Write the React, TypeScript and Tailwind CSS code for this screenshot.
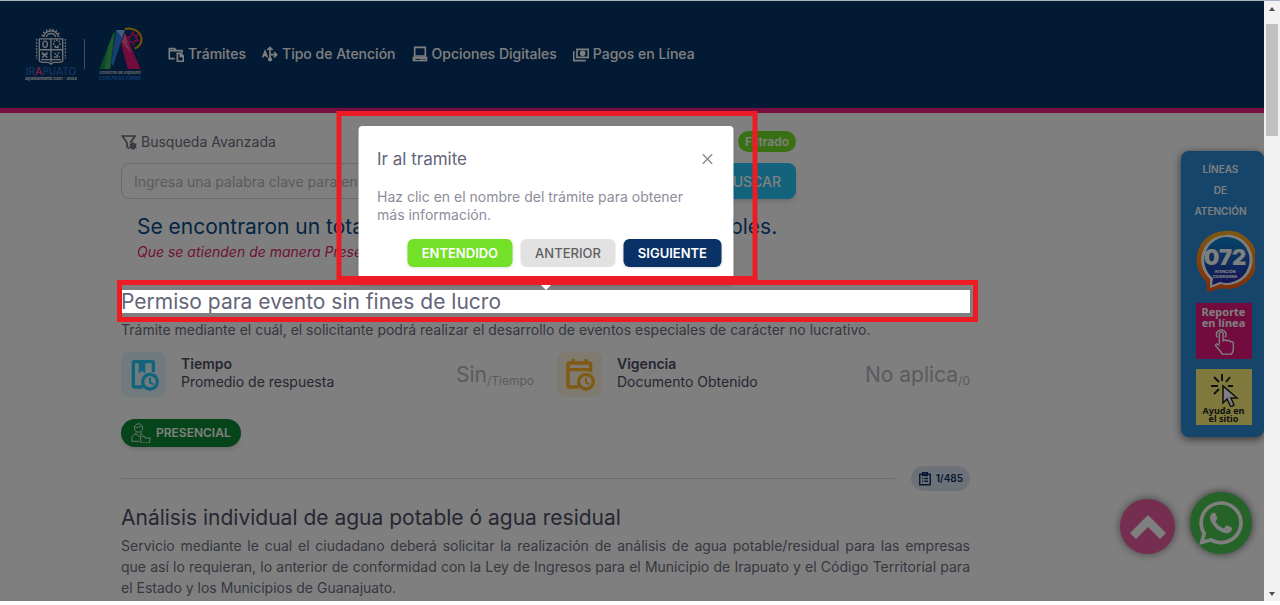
import { FaWhatsapp } from 'react-icons/fa';
import type { ReactNode } from 'react';

function Icon({ className, children }: { className: string; children: ReactNode }) {
  return (
    <svg
      viewBox="0 0 24 24"
      fill="none"
      stroke="currentColor"
      strokeWidth="2.5"
      className={className}
      aria-hidden="true"
    >
      {children}
    </svg>
  );
}

const navItems = [
  {
    label: 'Trámites',
    icon: (
      <>
        <path d="M10 19H2V4h8l2 3h9v3" />
        <path d="M2 7h10" />
        <path d="M14 11h5l4 4v8h-9zM18.5 11v4.5H23" />
      </>
    ),
  },
  {
    label: 'Tipo de Atención',
    icon: (
      <>
        <path d="M12 2v19M8 6l4-4 4 4M12 13h10M18 9l4 4-4 4" />
        <path d="M1 17L4.5 8 8 17M2 14h5" />
        <circle cx="12" cy="20" r="2" fill="currentColor" />
      </>
    ),
  },
  {
    label: 'Opciones Digitales',
    icon: (
      <>
        <path d="M4 2h16v13H4z" />
        <path d="M1 16h22v7H1z" fill="currentColor" stroke="none" />
        <path d="M5 20h8M15 20h2M18.5 20h2" stroke="#063468" strokeWidth="1.5" />
      </>
    ),
  },
  {
    label: 'Pagos en Línea',
    icon: (
      <>
        <path d="M6 5h17v12H6z" />
        <circle cx="14.5" cy="11" r="3" fill="currentColor" />
        <path d="M1 8v14h18" />
      </>
    ),
  },
];

const metrics = [
  {
    title: 'Tiempo',
    text: 'Promedio de respuesta',
    value: 'Sin',
    unit: 'Tiempo',
    tile: 'bg-[#dff6fe] text-[#26c6f9]',
    icon: (
      <>
        <path d="M11 21H5a1 1 0 0 1-1-1V3a1 1 0 0 1 1-1h13a1 1 0 0 1 1 1v7" />
        <path d="M8 2v9l2.5-2 2.5 2V2z" fill="currentColor" stroke="none" />
        <circle cx="16.5" cy="17" r="5.5" />
        <path d="M16.5 14v3.5l2.5 1.5" strokeWidth="1.5" />
      </>
    ),
  },
  {
    title: 'Vigencia',
    text: 'Documento Obtenido',
    value: 'No aplica',
    unit: '0',
    tile: 'bg-[#fff4df] text-[#fdb528]',
    icon: (
      <>
        <path d="M11 21H4a1 1 0 0 1-1-1V4a1 1 0 0 1 1-1h15a1 1 0 0 1 1 1v6" />
        <path d="M3 8h17M7 0v3M16.5 0v3" />
        <circle cx="16.5" cy="17" r="5.5" />
        <path d="M16.5 14v3.5l2.5 1.5" strokeWidth="1.5" />
      </>
    ),
  },
];

function CityLogo() {
  return (
    <a href="#" aria-label="Irapuato" className="w-[54px] flex flex-col items-center">
      <svg viewBox="0 0 40 40" className="w-9 h-10" fill="none" stroke="#e5e7eb" strokeWidth="1.5">
        <path d="M12 9a8 7 0 0 1 16 0" />
        <path d="M11 8a9 7 0 0 1 18 0" strokeWidth="3" strokeDasharray="1.5 2" />
        <path d="M15 9a5 4 0 0 1 10 0" />
        <path d="M7 11h26v24c0 2-2 2-5 2h-5l-3 2-3-2h-5c-3 0-5 0-5-2z" />
        <path d="M4 11v22M36 11v22" strokeDasharray="2 1.5" />
        <path d="M20 11v26M7 23h26M9 34h22" />
        <ellipse cx="13.5" cy="17" rx="2.5" ry="3.5" />
        <circle cx="26.5" cy="16" r="3.5" strokeDasharray="2 1" />
        <path d="M24 20l5 1M10 26l6 6M16 26l-6 6M10 28h6" />
        <path d="M24 27l5 4M29 26l-4 6M23 31h7" strokeDasharray="2 1" />
      </svg>
      <span className="text-[10px] leading-[9px] font-semibold text-[#2563b5]">
        IR<span className="text-[#e83e8c]">A</span>PUATO
      </span>
      <span className="whitespace-nowrap text-[4px] leading-[5px] font-bold text-[#e5e7eb]">
        Ayuntamiento 2021 - 2024
      </span>
    </a>
  );
}

function GovernmentLogo() {
  return (
    <a href="#" aria-label="Gobierno de Irapuato" className="w-12 flex flex-col items-center">
      <svg viewBox="0 0 46 44" className="w-[46px] h-[43px]">
        <path d="M2 43L16 6l2 0-5 37z" fill="#0c9a47" />
        <path d="M11 20l6-14-4 37H7z" fill="#3fae5c" />
        <path d="M19 3h9L16 40l-2-3z" fill="#2b7fe0" />
        <path d="M19 3h9l-3 8z" fill="#8ab8f5" />
        <path d="M28 6l16 37H31L24 17z" fill="#e6187d" />
        <path d="M28 6l6 21-9-12z" fill="#f0669f" />
        <path d="M28 2c10-2 17 4 17 11 0 4-3 8-7 9" fill="none" stroke="#f5a800" strokeWidth="2" />
        <path
          d="M36 5l1 4 4-1-2 3 3 3-4 0-1 4-2-3-4 2 2-4-3-3 4 0z"
          fill="none"
          stroke="#e6187d"
          strokeWidth="1.5"
        />
      </svg>
      <span className="whitespace-nowrap text-[4px] leading-[5px] italic font-bold text-[#d1d5db]">
        Gobierno de Irapuato
      </span>
      <span className="whitespace-nowrap text-[5px] leading-[6px] italic font-bold text-[#2b6fd0]">
        CON PASO FIRME
      </span>
    </a>
  );
}

function Header() {
  return (
    <header className="h-[112px] shrink-0 flex items-center pl-6 pb-[2px] bg-[#063468] border-b-[5px] border-[#f01a80]">
      <CityLogo />
      <div className="w-px h-[30px] ml-[6px] mr-[11px] bg-[#8b9bb0]" />
      <GovernmentLogo />
      <nav className="flex gap-4 ml-6 text-[14px] font-medium text-white">
        {navItems.map((item) => (
          <a key={item.label} href="#" className="flex items-center gap-1 whitespace-nowrap">
            <Icon className="size-4">{item.icon}</Icon>
            {item.label}
          </a>
        ))}
      </nav>
    </header>
  );
}

function SearchForm() {
  return (
    <form className="w-[675px]">
      <div className="flex items-center justify-between">
        <label htmlFor="keyword" className="flex items-center gap-1 text-[14px] text-[#6d6f7f]">
          <Icon className="size-4">
            <path d="M14 13l7-10H2l7 10v6l3 3" />
            <circle cx="18" cy="18" r="3.5" />
            <path d="M18 12v12M12.5 15l11 6M12.5 21l11-6" strokeWidth="1.5" />
          </Icon>
          Busqueda Avanzada
        </label>
        <span className="h-[21px] px-[7px] flex items-center rounded-full bg-[#72e128] text-[12px] font-semibold text-white">
          Filtrado
        </span>
      </div>
      <div className="flex mt-[11px] gap-2">
        <input
          id="keyword"
          type="text"
          placeholder="Ingresa una palabra clave para encontrar tu trámite"
          className="grow h-9 px-3 rounded-lg border border-[#d3d4da] text-[14px] text-[#4c4e64] placeholder:text-[#b4b5be]"
        />
        <button
          type="button"
          className="h-9 px-[15px] rounded-lg bg-[#26c6f9] text-[14px] font-medium text-white shadow-md"
        >
          BUSCAR
        </button>
      </div>
    </form>
  );
}

function TourPopover() {
  return (
    <div className="absolute bottom-[5px] left-1/2 -translate-x-1/2 w-[375px] h-[159px]">
      <div
        role="dialog"
        aria-label="Ir al tramite"
        className="h-full flex flex-col px-3 pt-[21px] rounded bg-white shadow"
      >
        <div className="flex items-center justify-between px-[7px]">
          <h3 className="text-[17px] leading-6 text-[#636578]">Ir al tramite</h3>
          <button type="button" aria-label="Cerrar" className="text-[#8d8d8d]">
            <Icon className="size-[14px]">
              <path d="M4 4l16 16M20 4L4 20" />
            </Icon>
          </button>
        </div>
        <p className="mt-[17px] px-[7px] text-[14px] leading-[18px] text-[#8c8d9b]">
          Haz clic en el nombre del trámite para obtener más información.
        </p>
        <div className="flex justify-end gap-2 mt-[15px] text-[13px] leading-7">
          <button type="button" className="px-[14px] rounded-md bg-[#72e128] font-semibold text-white shadow">
            ENTENDIDO
          </button>
          <button type="button" className="px-[15px] rounded-md bg-[#e2e2e2] font-medium text-[#606060]">
            ANTERIOR
          </button>
          <button type="button" className="px-[14px] rounded-md bg-[#0a3266] font-semibold text-white shadow">
            SIGUIENTE
          </button>
        </div>
      </div>
      <div className="absolute -left-[22px] -right-6 -top-[15px] bottom-1 border-5 border-[#ed1c24]" />
    </div>
  );
}

function HighlightedTitle() {
  return (
    <div className="relative z-20 mt-7">
      {/* the wide spread shadow dims the rest of the page */}
      <h2 className="bg-white text-[21px] leading-[23px] text-[#636578] shadow-[0_0_0_3000px_rgba(0,0,0,0.5)]">
        <a href="#">Permiso para evento sin fines de lucro</a>
      </h2>
      <div className="absolute inset-x-0 bottom-full">
        <TourPopover />
      </div>
      <div className="absolute -left-1 -right-2 -top-[10px] -bottom-[9px] border-5 border-[#ed1c24]" />
      <svg viewBox="0 0 10 5" className="absolute bottom-full left-1/2 -translate-x-1/2 w-[10px] h-[5px]">
        <path d="M0 0h10L5 5z" fill="#fff" />
      </svg>
    </div>
  );
}

function Results() {
  return (
    <main className="pl-[121px] pr-[294px] pt-[18px]">
      <SearchForm />
      <div className="pl-4 mt-[14px]">
        <h1 className="text-[21px] leading-7 text-[#0a4a8c]">
          Se encontraron un total de 485 Trámites y Servicios disponibles.
        </h1>
        <p className="text-[14px] leading-[21px] italic text-[#e0246f]">Que se atienden de manera Presencial</p>
      </div>

      <HighlightedTitle />
      <p className="mt-[7px] text-[14px] leading-5 text-[#6d6f7f]">
        Trámite mediante el cuál, el solicitante podrá realizar el desarrollo de eventos especiales de carácter no
        lucrativo.
      </p>

      <div className="grid grid-cols-2 gap-[23px] mt-3">
        {metrics.map((m) => (
          <div key={m.title} className="flex items-center">
            <div className={`size-[45px] flex items-center justify-center rounded-lg ${m.tile}`}>
              <Icon className="size-8">{m.icon}</Icon>
            </div>
            <div className="ml-[15px] pb-1 text-[14px] leading-[18px] text-[#4c4e64]">
              <div className="font-semibold">{m.title}</div>
              <div>{m.text}</div>
            </div>
            <div className="ml-auto text-[21px] text-[#b4b5be]">
              {m.value}
              <sub className="text-[12px]">/{m.unit}</sub>
            </div>
          </div>
        ))}
      </div>

      <button
        type="button"
        className="mt-[22px] h-7 px-[10px] flex items-center gap-[5px] rounded-full bg-[#0c8a34] text-[12px] font-semibold text-white shadow-md"
      >
        <Icon className="size-5">
          <circle cx="9" cy="6" r="5" strokeWidth="1" />
          <path
            d="M5 5c2 1 6 0 8-2M1 22v-4c0-3 3-4 5-5l3 3 3-3 2 1M1 22h9M11 16h5l1 2h6l-1 6H12zM6 13v-2M12 13v-2"
            strokeWidth="1"
          />
        </Icon>
        PRESENCIAL
      </button>

      <div className="flex items-center gap-4 mt-[19px]">
        <div className="grow h-px bg-[#d9dade]" />
        <span className="h-[25px] px-[7px] flex items-center gap-1 rounded-full bg-[#dbe3f0] text-[10px] font-semibold text-[#0a3266]">
          <Icon className="size-[14px]">
            <path d="M3 4h18v18H3zM8 1h8v5H8zM7 11h2M11 11h6M7 16h2M11 16h6" />
          </Icon>
          1/485
        </span>
      </div>

      <h2 className="mt-[13px] text-[21px] leading-7 text-[#4c4e64]">
        <a href="#">Análisis individual de agua potable ó agua residual</a>
      </h2>
      <p className="mt-[3px] text-[14px] leading-[21px] text-justify text-[#6d6f7f]">
        Servicio mediante le cual el ciudadano deberá solicitar la realización de análisis de agua potable/residual para
        las empresas que&nbsp;así lo requieran, lo anterior de conformidad con la Ley de Ingresos para el Municipio de
        Irapuato y el Código Territorial para el&nbsp;Estado y los Municipios de Guanajuato.
      </p>
    </main>
  );
}

function HelpLines() {
  return (
    <aside className="absolute z-10 right-0 top-[150px] w-[83px] pt-2 pb-3 flex flex-col items-center rounded-lg bg-[#2b8ad4] shadow-[0_2px_8px_rgba(0,0,0,0.6)]">
      <h2 className="mr-1 text-center text-[10px] leading-[21px] font-semibold text-white">
        LÍNEAS
        <br />
        DE
        <br />
        ATENCIÓN
      </h2>
      <a href="#" aria-label="072 Atención Ciudadana" className="mt-2 ml-1">
        <svg viewBox="0 0 60 62" className="w-[60px] h-[62px]">
          <defs>
            <linearGradient id="ring" x1="0" y1="0" x2="0" y2="1">
              <stop offset="0" stopColor="#ffb020" />
              <stop offset="1" stopColor="#ff5a14" />
            </linearGradient>
            <linearGradient id="disc" x1="0" y1="0" x2="0" y2="1">
              <stop offset="0" stopColor="#0a86d0" />
              <stop offset="1" stopColor="#2a2aa8" />
            </linearGradient>
          </defs>
          <path
            d="M30 2a28 28 0 1 1-4 55L13 61l-1-10A28 28 0 0 1 30 2z"
            fill="url(#ring)"
            stroke="url(#ring)"
            strokeWidth="2"
          />
          <path d="M30 5a25 25 0 1 1-4 49l-11 4v-9A25 25 0 0 1 30 5z" fill="#fff" />
          <path d="M30 7a23 23 0 1 1-5 45l-8 3 1-7A23 23 0 0 1 30 7z" fill="url(#disc)" />
          <text x="30" y="35" textAnchor="middle" fontSize="22" fontWeight="900" fill="#fff" fontFamily="Inter">
            072
          </text>
          <text x="30" y="43" textAnchor="middle" fontSize="4" fontWeight="800" fill="#fff" fontFamily="Inter">
            ATENCIÓN
          </text>
          <text x="30" y="48" textAnchor="middle" fontSize="4" fontWeight="800" fill="#fff" fontFamily="Inter">
            CIUDADANA
          </text>
        </svg>
      </a>
      <a
        href="#"
        className="size-14 mt-[11px] ml-[2px] pt-[3px] flex flex-col items-center bg-[#e6187d] font-['Noto_Sans'] text-center text-[11px] leading-[11px] font-bold text-white"
      >
        <span>Reporte</span>
        <span>en línea</span>
        <svg
          viewBox="0 0 24 30"
          className="w-6 h-[28px]"
          fill="none"
          stroke="currentColor"
          strokeWidth="1.5"
          strokeLinejoin="round"
        >
          <path d="M7 17V6a2 2 0 0 1 4 0v8c1-2 4-1 4 0 1-1 4-1 4 1 2-1 3 0 3 2v6c0 2-1 3-2 5H10c-1-3-5-6-7-9 0-3 3-2 4 0" />
          <path d="M5 10a5 5 0 1 1 8 0" />
        </svg>
      </a>
      <a
        href="#"
        className="size-14 mt-[10px] ml-[2px] pt-1 flex flex-col items-center bg-[#fff27a] font-['Noto_Sans'] text-center text-[9px] leading-[8px] font-bold text-[#222]"
      >
        <svg viewBox="0 0 30 34" className="w-[30px] h-[34px]" fill="none" stroke="currentColor" strokeWidth="2">
          <path d="M13 1v7M2 13h7M19 13h5M5 4l5 5M21 4l-4 5M5 21l5-5" />
          <path d="M14 13v17l4-4 4 8 3-2-3-7h6z" fill="#fff" strokeWidth="1.5" />
        </svg>
        <span>Ayuda en</span>
        <span>el sitio</span>
      </a>
    </aside>
  );
}

function FloatingButtons() {
  return (
    <div className="absolute z-10 right-3 bottom-[47px] flex items-end gap-[15px]">
      <button
        type="button"
        aria-label="Volver arriba"
        className="size-[55px] flex items-center justify-center rounded-full bg-[#ea5c9f] text-white shadow-[0_0_8px_rgba(0,0,0,0.5)]"
      >
        <svg viewBox="0 0 38 26" className="w-[38px] h-[26px]">
          <path d="M19 1L37 19l-6 6-12-12L7 25l-6-6z" fill="currentColor" />
        </svg>
      </button>
      <a
        href="#"
        aria-label="WhatsApp"
        className="size-[62px] flex items-center justify-center rounded-full bg-[#4cc753] text-white shadow-[0_0_8px_rgba(0,0,0,0.6)]"
      >
        <FaWhatsapp size={50} />
      </a>
    </div>
  );
}

function Scrollbar() {
  return (
    <div className="w-4 shrink-0 flex flex-col items-center bg-[#f1f1f1]" aria-hidden="true">
      <svg viewBox="0 0 16 23" className="w-4 h-[23px]">
        <path d="M5 10l3-4 3 4z" fill="#505050" />
      </svg>
      <div className="w-3 h-28 bg-[#c1c1c1]" />
      <svg viewBox="0 0 16 16" className="w-4 h-4 mt-auto">
        <path d="M5 7l3 4 3-4z" fill="#505050" />
      </svg>
    </div>
  );
}

export default function App() {
  return (
    <div className="h-screen flex flex-col overflow-hidden bg-white pb-1 border-t border-[#a9b5c0] font-['Inter',sans-serif]">
      <div className="grow min-h-0 flex">
        <div className="relative grow min-w-0 flex flex-col overflow-hidden bg-white">
          <Header />
          <Results />
          <HelpLines />
          <FloatingButtons />
        </div>
        <Scrollbar />
      </div>
    </div>
  );
}
